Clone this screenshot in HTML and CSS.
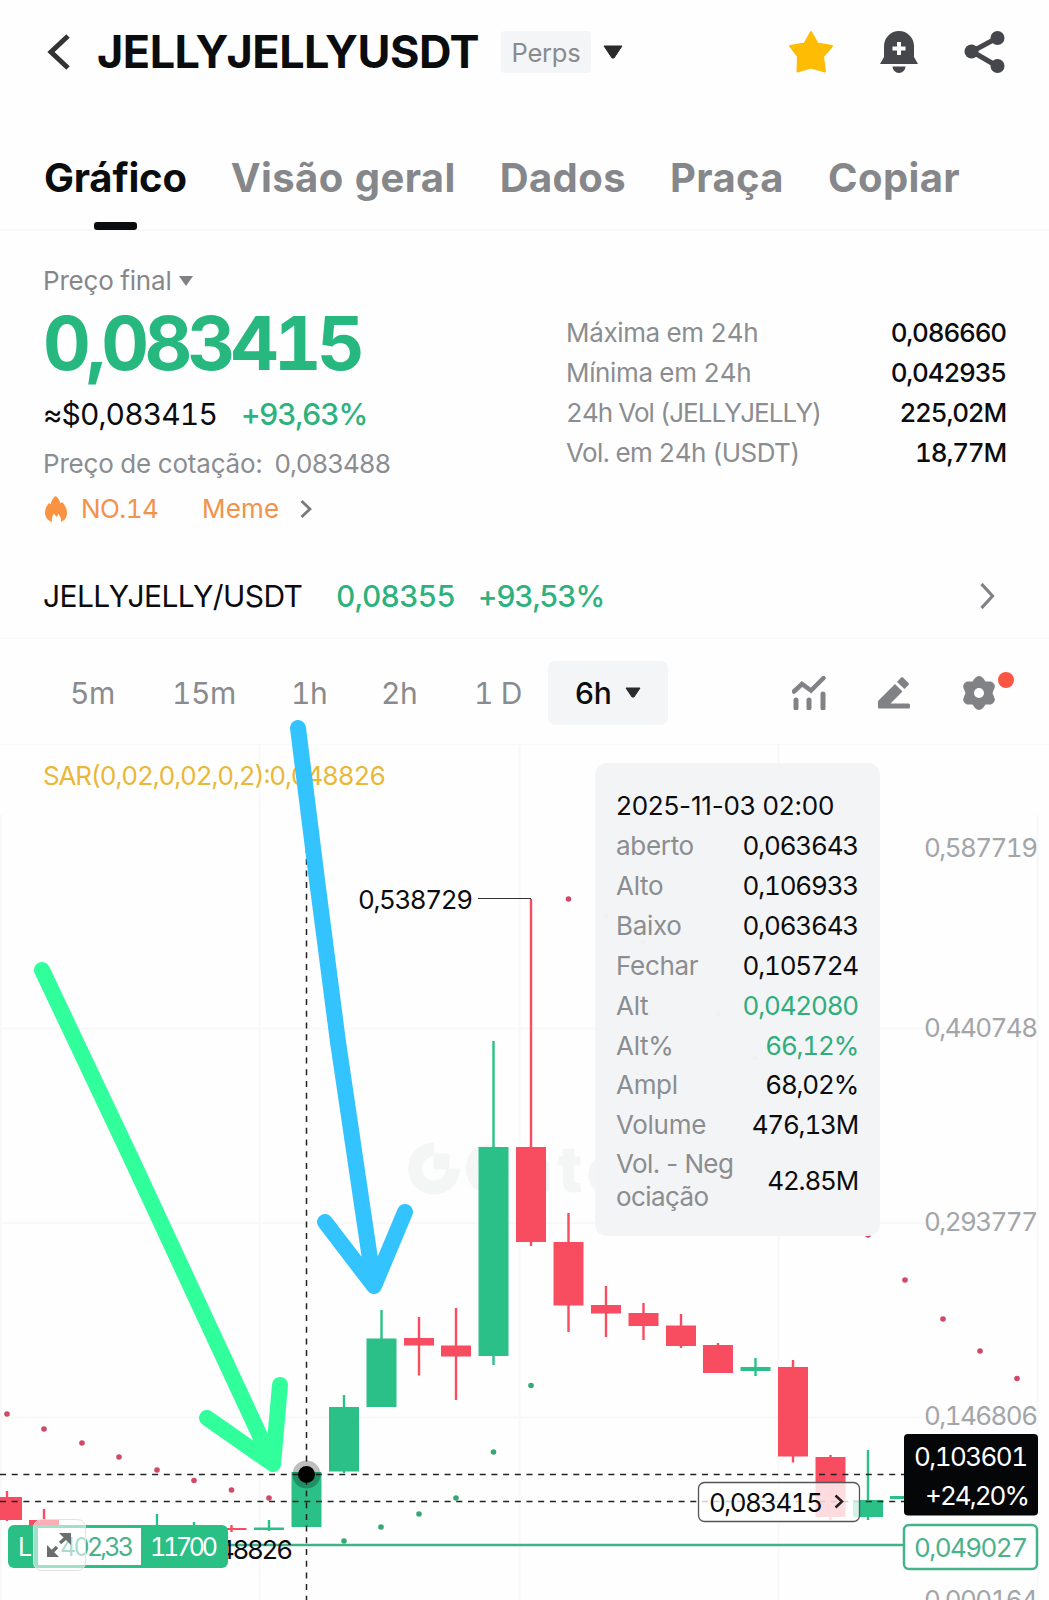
FILE: index.html
```html
<!DOCTYPE html>
<html lang="pt">
<head>
    <meta charset="UTF-8">
    <meta name="viewport" content="width=device-width, initial-scale=1.0">
    <title>JELLYJELLYUSDT Perps</title>
    <link rel="stylesheet" href="styles.css">
</head>
<body>

    <!-- Header -->
    <header class="header">
        <svg class="back" width="24" height="36" viewBox="0 0 24 36"><path d="M21 2 L4 18 L21 34" fill="none" stroke="#333" stroke-width="5"/></svg>
        <h1>JELLYJELLYUSDT</h1>
        <span class="badge">Perps</span>
        <svg class="caret" width="20" height="14" viewBox="0 0 20 14"><path d="M1 1h18L11 13H9z" fill="#2a2a2a" stroke="#2a2a2a" stroke-linejoin="round"/></svg>
        <div class="header-icons">
            <svg width="46" height="44" viewBox="0 0 46 44"><path d="M23 2 L29.500 13.500 L44 16 L35 26.500 L37 41.500 L23 37.500 L9.500 41.500 L10 26.500 L2 16 L16.500 13.500Z" fill="#ffbc05" stroke="#ffbc05" stroke-width="2" stroke-linejoin="round"/></svg>
            <svg width="38" height="44" viewBox="0 0 38 44">
                <path d="M4 16a15 15 0 0 1 30 0v11l4 7H0l4-7z" fill="#45474d"/>
                <path d="M12.500 36.500h13a6.500 6.500 0 0 1-13 0z" fill="#45474d"/>
                <path d="M19 12v13M12.500 18.500h13" stroke="#fff" stroke-width="4"/>
            </svg>
            <svg width="41" height="44" viewBox="0 0 41 44">
                <path d="M33 8L8 21.500L33 36" fill="none" stroke="#45474d" stroke-width="5"/>
                <circle cx="33.500" cy="8" r="7" fill="#45474d"/>
                <circle cx="7.500" cy="21.500" r="7" fill="#45474d"/>
                <circle cx="33.500" cy="36" r="7" fill="#45474d"/>
            </svg>
        </div>
    </header>

    <!-- Tabs -->
    <nav class="tabs">
        <a class="tab active">Gráfico</a>
        <a class="tab">Visão geral</a>
        <a class="tab">Dados</a>
        <a class="tab">Praça</a>
        <a class="tab">Copiar</a>
    </nav>

    <!-- Price summary -->
    <section class="summary">
        <div class="price-box">
            <div class="price-label">Preço final <svg width="14" height="10" viewBox="0 0 14 10"><path d="M0 0h14L7 10z" fill="#7f8184"/></svg></div>
            <div class="price">0,083415</div>
            <div class="approx"><span>≈$0,083415</span><span class="up">+93,63%</span></div>
            <div class="quote"><span>Preço de cotação:</span><span class="quote-value">0,083488</span></div>
            <div class="tags">
                <svg class="flame" width="22" height="26" viewBox="0 0 22 26"><path d="M10.500 0C13 1.500 14.500 4 15.500 7.500L17 6C20 9 22 13 22 17C22 21.500 19.500 24.500 16 26C16.500 22 15 20 13.500 18L11.500 21L9 17.500C7.500 19.500 6.500 22 7 26C2.500 24.500 0 21 0 16.500C0 12.500 2 9.500 4 7L5.500 8.500C6 5 8 2 10.500 0Z" fill="#fb923f"/></svg>
                <span class="rank">NO.14</span>
                <span class="topic">Meme</span>
                <svg width="12" height="18" viewBox="0 0 12 18"><path d="M1.500 1l8.500 8l-8.500 8" fill="none" stroke="#77797c" stroke-width="2.800"/></svg>
            </div>
        </div>
        <dl class="stats">
            <dt>Máxima em 24h</dt><dd>0,086660</dd>
            <dt>Mínima em 24h</dt><dd>0,042935</dd>
            <dt class="tight">24h Vol (JELLYJELLY)</dt><dd>225,02M</dd>
            <dt>Vol. em 24h (USDT)</dt><dd>18,77M</dd>
        </dl>
    </section>

    <!-- Spot pair -->
    <section class="pair">
        <span class="pair-name">JELLYJELLY/USDT</span>
        <span class="pair-price">0,08355</span>
        <span class="pair-change">+93,53%</span>
        <svg class="pair-arrow" width="15" height="26" viewBox="0 0 15 26"><path d="M1.500 1l11 12l-11 12" fill="none" stroke="#808285" stroke-width="3.200"/></svg>
    </section>

    <!-- Timeframes -->
    <section class="timeframes">
        <span class="tf tf-5m">5m</span>
        <span class="tf tf-15m">15m</span>
        <span class="tf tf-1h">1h</span>
        <span class="tf tf-2h">2h</span>
        <span class="tf tf-1d">1 D</span>
        <span class="tf-active">6h <svg width="16" height="11" viewBox="0 0 16 11"><path d="M1 1h14L9 10H7z" fill="#2a2b2d" stroke="#2a2b2d" stroke-linejoin="round"/></svg></span>
        <div class="tools">
            <svg width="34" height="34" viewBox="0 0 34 34" fill="none" stroke="#808285">
                <path d="M2 15.500l8-7.500 9 6.500L31.500 2" stroke-width="4.500" stroke-linecap="round"/>
                <path d="M4 24v8M17 24v8M31 18v14" stroke-width="5" stroke-linecap="round"/>
            </svg>
            <svg width="34" height="34" viewBox="0 0 34 34" fill="#808285">
                <path d="M18 8l7.500 7.500-12 12H31.500a1.500 1.500 0 0 1 1.500 1.500v2a1.500 1.500 0 0 1-1.500 1.500H2a1 1 0 0 1-1-1V25z"/>
                <path d="M20 6l4-4.500a1.500 1.500 0 0 1 2 0l5.500 5.500a1.500 1.500 0 0 1 0 2L27.500 13z"/>
            </svg>
            <span class="settings">
                <svg width="34" height="36" viewBox="-17 -18 34 36">
                    <path d="M-4-15Q0-19 4-15L6.500-11.500L12-11.500Q17-9 15.500-5L13.500 0L15.500 5Q17 9 12 11.500L6.500 11.500L4 15Q0 19-4 15L-6.500 11.500L-12 11.500Q-17 9-15.500 5L-13.500 0L-15.500-5Q-17-9-12-11.500L-6.500-11.500Z" fill="#808285"/>
                    <circle r="5" fill="#fff"/>
                </svg>
                <i class="dot"></i>
            </span>
        </div>
    </section>

    <!-- Chart -->
    <main class="chart">
        <svg class="plot" width="1049" height="855" viewBox="0 745 1049 855">
            <g class="grid">
                <path d="M1 815V1600M259.500 745V1600M519.500 745V1600M778.500 745V1600M1037.500 815V1600"/>
                <path d="M0 1028.500H1010M0 1223H1010M0 1417.500H1010"/>
            </g>

            <g class="watermark">
                <path d="M434 1149.500A19 19 0 1 0 453 1168.500" fill="none" stroke-width="14"/>
                <rect x="434" y="1154" width="15" height="15"/>
                <text x="464" y="1191" textLength="160">Gate</text>
            </g>

            <text class="sar" x="43" y="784.500" textLength="343">SAR(0,02,0,02,0,2):0,048826</text>

            <g class="axis">
                <text x="924" y="857" textLength="114">0,587719</text>
                <text x="924" y="1036.500" textLength="114">0,440748</text>
                <text x="924" y="1230.500" textLength="114">0,293777</text>
                <text x="924" y="1425" textLength="114">0,146806</text>
                <text x="924" y="1609" textLength="114">0,000164</text>
            </g>

            <g id="candles"></g>

            <text class="dark" x="358" y="909" textLength="115">0,538729</text>
            <path d="M478 898.500H531" stroke="#333" stroke-width="1.200"/>

            <!-- position line -->
            <path d="M228 1545H904" stroke="#3fb287" stroke-width="2.600"/>
            <text class="dark" x="218" y="1559" textLength="75">48826</text>

            <!-- crosshair -->
            <g class="cross">
                <path d="M306.500 847V1600"/>
                <path d="M0 1474.500H904M0 1501.500H904"/>
            </g>
            <circle cx="306.500" cy="1474.500" r="14" fill="#000" opacity=".25"/>
            <circle cx="306.500" cy="1474.500" r="8.500"/>

            <!-- last price -->
            <rect x="698.500" y="1482.500" width="161" height="39" rx="6" fill="#fff" fill-opacity=".8" stroke="#555" stroke-width="1.300"/>
            <text class="dark" x="709" y="1511.500" textLength="114">0,083415</text>
            <path d="M835.500 1495.500l6.500 6l-6.500 6" fill="none" stroke="#222" stroke-width="2.500"/>

            <rect x="904" y="1434" width="134" height="81.500" rx="4" fill="#050607"/>
            <text class="light" x="914" y="1466" textLength="114">0,103601</text>
            <text class="light" x="925" y="1505" textLength="105">+24,20%</text>

            <rect x="904" y="1525" width="133" height="44" rx="5" fill="#fff" stroke="#43b389" stroke-width="2.500"/>
            <text class="green" x="914" y="1556.500" textLength="114">0,049027</text>

            <!-- position badge -->
            <rect x="8" y="1525" width="220" height="43" rx="6" fill="#2abf85"/>
            <rect x="38" y="1528" width="103" height="37" fill="#fff"/>
            <text class="light small" x="18" y="1556">L</text>
            <text class="green small" x="60" y="1556" textLength="74">402,33</text>
            <text class="light small" x="150" y="1556" textLength="68">11700</text>
            <rect x="33.500" y="1519.500" width="52" height="51" rx="8" fill="#fff" fill-opacity=".55" stroke="#dfe3e2"/>
            <g fill="#6b6e6e" stroke="#6b6e6e" stroke-width="3.500">
                <path d="M71 1533V1545L59 1533Z" stroke="none"/>
                <path d="M68 1536L60 1543"/>
                <path d="M47 1557V1545L59 1557Z" stroke="none"/>
                <path d="M50 1554L57 1547"/>
            </g>

            <!-- drawn arrows -->
            <g class="arrow">
                <path d="M298 728L317 880L338 1042L374 1286M325 1222L374 1286L405 1212" stroke="#33c3ff"/>
                <path d="M42 970L131 1158L273 1464M207 1418L273 1464L280 1385" stroke="#31ff9b"/>
            </g>
        </svg>

        <div class="tooltip">
            <div class="tooltip-date">2025-11-03 02:00</div>
            <div class="row"><span>aberto</span><b>0,063643</b></div>
            <div class="row"><span>Alto</span><b>0,106933</b></div>
            <div class="row"><span>Baixo</span><b>0,063643</b></div>
            <div class="row"><span>Fechar</span><b>0,105724</b></div>
            <div class="row"><span>Alt</span><b class="up">0,042080</b></div>
            <div class="row"><span>Alt%</span><b class="up">66,12%</b></div>
            <div class="row"><span>Ampl</span><b>68,02%</b></div>
            <div class="row"><span>Volume</span><b>476,13M</b></div>
            <div class="row tall"><span>Vol. - Neg<br>ociação</span><b>42.85M</b></div>
        </div>
    </main>

    <script src="chart.js"></script>
</body>
</html>
```
FILE: styles.css
```css
body {
    font-family: 'Inter', 'Liberation Sans', sans-serif;
    font-variant-numeric: tabular-nums;
    background: #fefefe;
    color: #0b0c0e;
    margin: 0;
    width: 1049px;
    height: 1600px;
    overflow: hidden;
}

svg {
    display: block;
    flex-shrink: 0;
}

.up {
    color: #2db27e;
}

/* Header */
.header {
    display: flex;
    align-items: center;
    height: 103px;
    padding: 0 44px 0 47px;
}

h1 {
    font-size: 45px;
    font-weight: 700;
    letter-spacing: -0.5px;
    margin: 0 0 0 26px;
    width: 404px;
    white-space: nowrap;
}

.badge {
    box-sizing: border-box;
    width: 90px;
    height: 42px;
    line-height: 43px;
    border-radius: 4px;
    background: #f4f5f7;
    color: #898b8e;
    font-size: 25.5px;
    letter-spacing: -0.2px;
    text-align: center;
}

.caret {
    margin-left: 12px;
}

.header-icons {
    display: flex;
    align-items: center;
    gap: 46px;
    margin-left: auto;
}

/* Tabs */
.tabs {
    display: flex;
    box-sizing: border-box;
    height: 128px;
    padding: 50px 0 0 44px;
    gap: 44px;
    border-bottom: 2px solid #f8f8f9;
}

.tab {
    font-size: 40px;
    font-weight: 650;
    line-height: 50px;
    letter-spacing: 0.4px;
    color: #85878a;
    white-space: nowrap;
}

.tab.active {
    color: #0b0c0e;
    letter-spacing: -0.2px;
}

.tab.active::after {
    content: "";
    display: block;
    width: 43px;
    height: 8px;
    margin: 19px auto 0;
    border-radius: 3px;
    background: #0b0c0e;
}

/* Price summary */
.summary {
    display: flex;
    justify-content: space-between;
    padding: 32px 43px 0 43px;
}

.price-label {
    display: flex;
    align-items: center;
    gap: 7px;
    line-height: 36px;
    font-size: 26px;
    letter-spacing: -0.2px;
    color: #85878a;
}

.price {
    font-size: 74px;
    font-weight: 650;
    line-height: 88px;
    letter-spacing: -4.7px;
    color: #26b87f;
}

.approx {
    display: flex;
    gap: 24px;
    line-height: 55px;
    font-size: 30px;
    letter-spacing: -0.9px;
}

.approx .up {
    font-weight: 500;
    letter-spacing: -1.3px;
}

.quote {
    display: flex;
    gap: 12px;
    line-height: 43px;
    margin-bottom: 1px;
    font-size: 26px;
    letter-spacing: -0.2px;
    color: #8b8d90;
}

.quote-value {
    letter-spacing: -1.1px;
}

.tags {
    display: flex;
    align-items: center;
    line-height: 46px;
    font-size: 26px;
    color: #f3924a;
}

.flame {
    margin: 0 14px 0 2px;
}

.rank {
    width: 121px;
    letter-spacing: -0.6px;
}

.topic {
    width: 98px;
    letter-spacing: 0.2px;
}

.stats {
    display: grid;
    grid-template-columns: 1fr auto;
    width: 440px;
    margin: 50px 0 0;
    font-size: 26px;
    line-height: 40px;
    grid-auto-rows: 40px;
    letter-spacing: -1.2px;
    align-content: start;
}

.stats dt {
    color: #8b8d90;
    letter-spacing: -0.35px;
}

.stats dt.tight {
    letter-spacing: -0.95px;
}

.stats dt:last-of-type {
    letter-spacing: -0.6px;
}

.stats dd {
    margin: 0;
    font-weight: 500;
    text-align: right;
}

/* Spot pair */
.pair {
    display: flex;
    align-items: center;
    box-sizing: border-box;
    height: 107px;
    padding: 22px 54px 0 43px;
    border-bottom: 2px solid #f9f9fa;
    font-size: 30px;
    letter-spacing: -0.6px;
}

.pair-name {
    width: 293px;
}

.pair-price {
    width: 142px;
    letter-spacing: -0.8px;
    color: #2db27e;
}

.pair-change {
    letter-spacing: -1.3px;
    color: #2db27e;
}

.pair-price,
.pair-change {
    font-weight: 450;
}

.pair-arrow {
    margin-left: auto;
}

/* Timeframes */
.timeframes {
    display: flex;
    align-items: center;
    box-sizing: border-box;
    height: 106px;
    padding: 2px 36px 0 70px;
    border-bottom: 1px solid #f9f9fa;
    font-size: 30px;
    letter-spacing: -0.4px;
    color: #898b8e;
}

.tf-5m {
    width: 102px;
}

.tf-15m {
    width: 119px;
}

.tf-1h {
    width: 90px;
}

.tf-2h {
    width: 93px;
}

.tf-1d {
    width: 74px;
}

.tf-active {
    display: flex;
    align-items: center;
    justify-content: center;
    gap: 14px;
    width: 120px;
    height: 64px;
    border-radius: 7px;
    background: #f4f5f7;
    color: #0b0c0e;
    font-weight: 500;
}

.tools {
    display: flex;
    align-items: center;
    gap: 51px;
    margin-left: auto;
}

.settings {
    position: relative;
    margin-right: 17px;
}

.dot {
    position: absolute;
    top: -3px;
    right: -18px;
    width: 16px;
    height: 16px;
    border-radius: 50%;
    background: #fb5643;
}

/* Chart */
.chart {
    position: relative;
    height: 855px;
}

.plot {
    overflow: visible;
    position: relative;
    z-index: 0;
}

.plot text {
    font-size: 26px;
}

.plot .small {
    font-size: 25px;
}

.grid path {
    stroke: #f8f8f9;
    stroke-width: 2;
}

.watermark {
    fill: #f4f6f6;
    stroke: #f4f6f6;
}

.plot .watermark text {
    font-size: 62px;
    font-weight: 800;
}

.plot .sar {
    fill: #e9b838;
}

.axis text {
    fill: #a3a5a8;
}

.dark {
    fill: #0b0c0e;
}

.light {
    fill: #fff;
}

.green {
    fill: #4ab28b;
}

.cross path {
    stroke: #222;
    stroke-width: 1.5;
    stroke-dasharray: 6 5.7;
}

.arrow path {
    fill: none;
    stroke-width: 16;
    stroke-linecap: round;
    stroke-linejoin: round;
}

/* Candle details */
.tooltip {
    position: absolute;
    top: 18px;
    left: 595px;
    box-sizing: border-box;
    width: 285px;
    height: 473px;
    padding: 22px 22px 0 21px;
    border-radius: 12px;
    background: rgba(243, 244, 246, 0.97);
    font-size: 26px;
    letter-spacing: -1.2px;
}

.tooltip-date {
    line-height: 41px;
    font-variant-numeric: normal;
    letter-spacing: -0.2px;
}

.row {
    display: flex;
    justify-content: space-between;
    line-height: 39.9px;
    color: #8b8d90;
}

.row span {
    font-variant-numeric: normal;
    letter-spacing: -0.3px;
}

.row b {
    font-weight: 400;
    color: #0b0c0e;
}

.row b.up {
    color: #2fae7d;
}

.row.tall {
    align-items: center;
    line-height: 33px;
    margin-top: 2px;
}

.row.tall span {
    letter-spacing: -0.6px;
}
```
FILE: chart.js
```js
const GREEN = '#2ac087';
const RED = '#f84c60';

// x center, body top, body bottom, wick top, wick bottom, color
const candles = [
    [7, 1497, 1520, 1491, 1521, RED],
    [44, 1520, 1530, 1509, 1530, RED],
    [157, 1530, 1532, 1514, 1532, GREEN],
    [194, 1530, 1532, 1522, 1532, GREEN],
    [231.5, 1528, 1530, 1525, 1532, RED],
    [269, 1527.5, 1530, 1520, 1531, GREEN],
    [306.5, 1472, 1527, 1472, 1527, GREEN],
    [344, 1407, 1471.5, 1395, 1473, GREEN],
    [381.5, 1338.5, 1407, 1310, 1407, GREEN],
    [419, 1338, 1345.5, 1317, 1375.5, RED],
    [456, 1345.5, 1356.5, 1308, 1400, RED],
    [493.5, 1147, 1356, 1041, 1365, GREEN],
    [531, 1147, 1242, 899, 1246, RED],
    [568.5, 1242, 1305.5, 1213, 1332, RED],
    [606, 1305, 1313.5, 1286, 1337, RED],
    [643.5, 1313, 1326, 1303, 1340, RED],
    [681, 1325.5, 1346, 1314, 1348, RED],
    [718, 1345, 1373, 1343, 1373, RED],
    [755.5, 1367, 1371, 1358, 1376, GREEN],
    [793, 1367, 1456.5, 1360, 1462.5, RED],
    [830.5, 1457, 1517, 1455, 1520, RED],
    [868, 1500, 1517, 1450, 1520, GREEN],
    [905, 1496, 1499, 1496, 1499, GREEN]
];

// parabolic SAR points
const sarDown = [[7, 1414], [44, 1429], [82, 1443], [119, 1457], [157, 1470], [194, 1480.5], [231.5, 1490], [269, 1498],
    [568.5, 899], [606, 916], [643, 942], [718, 1014], [755, 1058], [868, 1235], [905, 1280], [943, 1319], [980, 1351], [1017, 1378.5]];
const sarUp = [[344, 1541], [381, 1527], [419, 1514], [456, 1498], [493.5, 1452], [531, 1385.5]];

let out = '';
candles.forEach(([x, top, bottom, high, low, color]) => {
    out += `<rect x="${x - 1.2}" y="${high}" width="2.4" height="${low - high}" fill="${color}"/>`;
    out += `<rect x="${x - 15}" y="${top}" width="30" height="${bottom - top}" fill="${color}"/>`;
});
sarDown.forEach(([x, y]) => out += `<circle cx="${x}" cy="${y}" r="2.8" fill="#d04a68"/>`);
sarUp.forEach(([x, y]) => out += `<circle cx="${x}" cy="${y}" r="2.8" fill="#35a878"/>`);

document.getElementById('candles').innerHTML = out;
```
